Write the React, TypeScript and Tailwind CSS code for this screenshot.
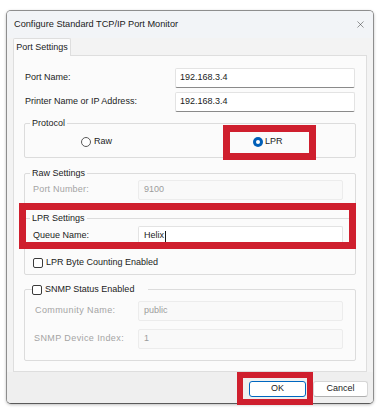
import React from 'react';
import { X } from 'lucide-react';

const font = "font-['Liberation_Sans',Arial,sans-serif]";

const TextBox: React.FC<{ value: string; disabled?: boolean; width: string; caret?: boolean; pad?: string }> = ({
  value,
  disabled,
  width,
  caret,
  pad = 'pl-[5px]',
}) => (
  <div
    className={`${width} h-[20px] flex items-center ${pad} rounded-[2px] border ${
      disabled
        ? 'bg-[#f9f9f9] border-[#ececec] text-[#9c9c9c]'
        : 'bg-white border-[#e3e3e3] border-b-[#8a8a8a] text-[#1b1b1b]'
    }`}
  >
    <span>{value}</span>
    {caret && <span className="w-px h-[11px] bg-[#1b1b1b] ml-px" />}
  </div>
);

const CheckBox: React.FC = () => (
  <span className="w-[10px] h-[10px] rounded-[2px] border border-[#3a3a3a] bg-white shrink-0" />
);

const Radio: React.FC<{ checked?: boolean }> = ({ checked }) =>
  checked ? (
    <span className="w-[10px] h-[10px] rounded-full bg-[#005fb8] flex items-center justify-center shrink-0">
      <span className="w-[4px] h-[4px] rounded-full bg-white" />
    </span>
  ) : (
    <span className="w-[10px] h-[10px] rounded-full border border-[#5a5a5a] bg-white shrink-0" />
  );

const App: React.FC = () => {
  return (
    <div className={`relative w-[388px] h-[418px] bg-white pt-[10px] pl-[6px] text-[9px] text-[#1b1b1b] ${font}`}>
      <div className="w-[368px] h-[394px] flex flex-col rounded-[5px] border border-[#8e8e8e] border-b-[#5a5a5a] bg-[#f3f3f3] shadow-[0_1px_3px_rgba(0,0,0,0.25)] overflow-hidden">
        {/* title bar */}
        <div className="h-[27px] flex items-center justify-between pl-[7px] pr-[7px] bg-[#f2f4f7]">
          <span className="text-[9.2px] text-[#1b1b1b]">Configure Standard TCP/IP Port Monitor</span>
          <X size={11} strokeWidth={1.1} className="text-[#333]" />
        </div>

        {/* tab */}
        <div className="flex pl-[6px]">
          <div className="relative z-10 w-[58px] h-[18px] -mb-px flex items-center justify-center border border-b-0 border-[#dedede] bg-[#fbfbfb] rounded-t-[2px]">
            Port Settings
          </div>
        </div>

        {/* panel */}
        <div className="mx-[6px] h-[317px] border border-[#dedede] bg-[#fbfbfb] px-[10px] pt-[12px]">
          <div className="flex items-center">
            <span className="w-[151px] pl-px">Port Name:</span>
            <TextBox value="192.168.3.4" width="w-[180px]" pad="pl-[4px]" />
          </div>
          <div className="flex items-center mt-[4px]">
            <span className="w-[151px] pl-px">Printer Name or IP Address:</span>
            <TextBox value="192.168.3.4" width="w-[180px]" pad="pl-[4px]" />
          </div>

          <fieldset className="mt-[6px] border border-[#dcdcdc] rounded-[2px] pt-[7px] pb-[9px]">
            <legend className="ml-[5px] px-[2px] leading-[11px]">Protocol</legend>
            <div className="flex items-center h-[12px]">
              <div className="flex items-center gap-[3px] ml-[56px]">
                <Radio />
                <span>Raw</span>
              </div>
              <div className="flex items-center gap-[2px] ml-[141px]">
                <Radio checked />
                <span>LPR</span>
              </div>
            </div>
          </fieldset>

          <fieldset className="mt-[10px] border border-[#dcdcdc] rounded-[2px] pt-px pb-[6px]">
            <legend className="ml-[5px] px-[2px] leading-[11px]">Raw Settings</legend>
            <div className="flex items-center">
              <span className="w-[113px] pl-[8px] text-[#a4a4a4] tracking-[0.2px]">Port Number:</span>
              <TextBox value="9100" width="w-[205px]" disabled />
            </div>
          </fieldset>

          <fieldset className="mt-[6px] border border-[#dcdcdc] rounded-[2px] pt-[2px] pb-[5px]">
            <legend className="ml-[5px] px-[2px] leading-[11px]">LPR Settings</legend>
            <div className="flex items-center">
              <span className="w-[113px] pl-[8px]">Queue Name:</span>
              <TextBox value="Helix" width="w-[205px]" caret />
            </div>
            <div className="flex items-center gap-[3px] h-[12px] mt-[11px] pl-[8px]">
              <CheckBox />
              <span>LPR Byte Counting Enabled</span>
            </div>
          </fieldset>

          <fieldset className="mt-[9px] border border-[#dcdcdc] rounded-[2px] pt-[6px] pb-[11px]">
            <legend className="ml-[7px] pr-[14px] leading-[11px] flex items-center gap-[3px]">
              <CheckBox />
              <span>SNMP Status Enabled</span>
            </legend>
            <div className="flex items-center">
              <span className="w-[113px] pl-[10px] text-[#a4a4a4] tracking-[0.4px]">Community Name:</span>
              <TextBox value="public" width="w-[205px]" disabled />
            </div>
            <div className="flex items-center mt-[8px]">
              <span className="w-[113px] pl-[9px] text-[#a4a4a4] tracking-[0.4px]">SNMP Device Index:</span>
              <TextBox value="1" width="w-[205px]" disabled />
            </div>
          </fieldset>
        </div>

        {/* buttons */}
        <div className="flex-1 flex justify-end items-start pt-[9px] pr-[5px] gap-[7px] bg-[#efefef]">
          <button className="w-[57px] h-[16px] rounded-[3px] border border-[#0067c0] bg-white text-[9px]">OK</button>
          <button className="w-[55px] h-[16px] rounded-[3px] border border-[#d6d6d6] border-b-[#b0b0b0] bg-white text-[9px]">
            Cancel
          </button>
        </div>
      </div>

      {/* red highlight annotations */}
      <div className="absolute left-[223px] top-[125px] w-[93px] h-[35px] border-[7px] border-[#cf1f2e]" />
      <div className="absolute left-[19px] top-[203px] w-[337px] h-[46px] border-[7px] border-[#cf1f2e]" />
      <div className="absolute left-[237px] top-[372px] w-[76px] h-[33px] border-[6px] border-[#cf1f2e]" />
    </div>
  );
};

export default App;
